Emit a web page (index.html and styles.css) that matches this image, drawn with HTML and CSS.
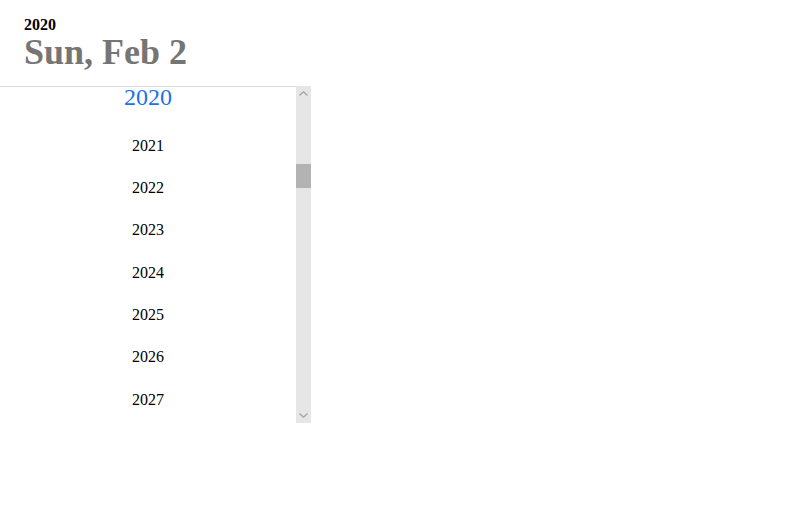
FILE: index.html
```html
<!DOCTYPE html>
<html>
<head>
<meta charset="utf-8">
<link rel="stylesheet" href="styles.css">
</head>
<body>
<div class="picker">
  <div class="toolbar">
    <div class="toolbar-year">2020</div>
    <div class="toolbar-date">Sun, Feb 2</div>
  </div>
  <div class="years">
    <div class="year-viewport">
      <div class="year-list">
        <div class="year selected">2020</div>
        <div class="year">2021</div>
        <div class="year">2022</div>
        <div class="year">2023</div>
        <div class="year">2024</div>
        <div class="year">2025</div>
        <div class="year">2026</div>
        <div class="year">2027</div>
      </div>
    </div>
    <div class="scrollbar">
      <div class="sb-button">
        <svg width="9" height="5" viewBox="0 0 9 5"><path d="M0.5 4.5 L4.5 0.8 L8.5 4.5" fill="none" stroke="#a0a0a0" stroke-width="1.2"/></svg>
      </div>
      <div class="sb-track">
        <div class="sb-thumb"></div>
      </div>
      <div class="sb-button">
        <svg width="9" height="5" viewBox="0 0 9 5"><path d="M0.5 0.5 L4.5 4.2 L8.5 0.5" fill="none" stroke="#a0a0a0" stroke-width="1.2"/></svg>
      </div>
    </div>
  </div>
</div>
</body>
</html>
```
FILE: styles.css
```css
html, body {
  margin: 0;
  padding: 0;
  background: #ffffff;
}
body {
  font-family: "Liberation Serif", "Times New Roman", serif;
}
.picker {
  width: 311px;
}
.toolbar {
  padding: 16px 24px 16px;
}
.toolbar-year {
  font-size: 16px;
  font-weight: bold;
  line-height: 18px;
  color: #000000;
}
.toolbar-date {
  font-size: 36px;
  font-weight: bold;
  line-height: 36px;
  color: #757575;
}
.years {
  display: flex;
  height: 337px;
}
.year-viewport {
  width: 296px;
  border-top: 1px solid #dddddd;
  overflow: hidden;
}
.year-list {
  margin-top: -15px;
}
.year {
  padding: 12px 0;
  text-align: center;
  font-size: 16px;
  line-height: 18.33px;
  color: #000000;
}
.year.selected {
  padding-bottom: 13px;
  font-size: 24px;
  line-height: 27.6px;
  color: #1a73e8;
}
.scrollbar {
  width: 15px;
  display: flex;
  flex-direction: column;
  background: #e6e6e6;
}
.sb-button {
  height: 15px;
  display: flex;
  align-items: center;
  justify-content: center;
}
.sb-track {
  flex: 1;
  padding-top: 63px;
}
.sb-thumb {
  height: 24px;
  background: #b3b3b3;
}
```
